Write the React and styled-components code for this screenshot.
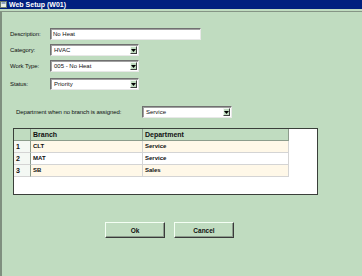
import React from "react";
import styled, { createGlobalStyle } from "styled-components";

const GlobalStyle = createGlobalStyle`
    html, body {
        margin: 0;
        padding: 0;
        background: #c0dcc0;
    }
    * {
        box-sizing: border-box;
    }
`;

const rows = [
    { no: 1, branch: "CLT", dept: "Service" },
    { no: 2, branch: "MAT", dept: "Service" },
    { no: 3, branch: "SB", dept: "Sales" },
];

const DropArrow = () => (
    <svg width="5" height="3" viewBox="0 0 5 3">
        <path d="M0 0h5L2.5 3z" fill="#000" />
    </svg>
);

const Select = ({ value, width }) => (
    <SelectBox $width={width}>
        <SelectText>{value}</SelectText>
        <DropButton>
            <DropArrow />
        </DropButton>
    </SelectBox>
);

const App = () => {
    return (
        <Window>
            <GlobalStyle />
            <TitleBar>
                <TitleIcon>
                    <svg width="7" height="7" viewBox="0 0 7 7">
                        <rect x="0.5" y="0.5" width="6" height="6" fill="#e8f0e8" stroke="#6a7a6a" />
                        <rect x="1.5" y="1.5" width="4" height="1" fill="#3a5aa0" />
                    </svg>
                </TitleIcon>
                <TitleText>Web Setup (W01)</TitleText>
            </TitleBar>
            <Rule />
            <Body>
                <Field>
                    <Label>Description:</Label>
                    <TextInput>No Heat</TextInput>
                </Field>
                <Field>
                    <Label>Category:</Label>
                    <Select value="HVAC" width={89} />
                </Field>
                <Field>
                    <Label>Work Type:</Label>
                    <Select value="005 - No Heat" width={89} />
                </Field>
                <Field $top={6}>
                    <Label>Status:</Label>
                    <Select value="Priority" width={89} />
                </Field>

                <DeptRow>
                    <DeptLabel>Department when no branch is assigned:</DeptLabel>
                    <Select value="Service" width={90} />
                </DeptRow>

                <TableBox>
                    <Grid>
                        <HeadCell />
                        <HeadCell>Branch</HeadCell>
                        <HeadCell>Department</HeadCell>
                        {rows.map((r, i) => (
                            <React.Fragment key={r.no}>
                                <NumCell>{r.no}</NumCell>
                                <Cell $alt={i % 2 === 0}>{r.branch}</Cell>
                                <Cell $alt={i % 2 === 0}>{r.dept}</Cell>
                            </React.Fragment>
                        ))}
                    </Grid>
                </TableBox>

                <Buttons>
                    <Button>Ok</Button>
                    <Button>Cancel</Button>
                </Buttons>
            </Body>
        </Window>
    );
};

const Window = styled.div`
    width: 362px;
    height: 276px;
    background: #c0dcc0;
    display: flex;
    flex-direction: column;
    font-family: "Liberation Sans", Arial, sans-serif;
    color: #101010;
    overflow: hidden;
`;

const TitleBar = styled.div`
    height: 9px;
    background: #00207f;
    display: flex;
    align-items: center;
    gap: 2px;
`;

const TitleIcon = styled.span`
    display: flex;
    width: 7px;
    height: 7px;
`;

const TitleText = styled.span`
    color: #ffffff;
    font-weight: bold;
    font-size: 7px;
    line-height: 9px;
`;

const Rule = styled.div`
    margin-top: 2px;
    height: 1px;
    background: #859585;
`;

const Body = styled.div`
    flex: 1;
    border-left: 2px solid #7f8f7f;
    padding: 16px 0 0 8px;
    display: flex;
    flex-direction: column;
`;

const Field = styled.div`
    display: flex;
    align-items: center;
    height: 12px;
    margin-top: ${(p) => (p.$top !== undefined ? p.$top : 4)}px;

    &:first-child {
        margin-top: 0;
    }
`;

const Label = styled.span`
    width: 40px;
    font-size: 6px;
    letter-spacing: -0.1px;
`;

const sunken = `
    background: #ffffff;
    border-top: 1px solid #707070;
    border-left: 1px solid #707070;
    border-bottom: 1px solid #e8e8e8;
    border-right: 1px solid #e8e8e8;
    box-shadow: inset 1px 1px 0 #a0a0a0;
`;

const TextInput = styled.div`
    ${sunken}
    width: 151px;
    height: 12px;
    font-size: 6px;
    line-height: 10px;
    padding-left: 2px;
`;

const SelectBox = styled.div`
    ${sunken}
    width: ${(p) => p.$width}px;
    height: 12px;
    display: flex;
    align-items: center;
    justify-content: space-between;
    padding: 0 1px 0 3px;
`;

const SelectText = styled.span`
    font-size: 6px;
    line-height: 10px;
`;

const DropButton = styled.span`
    width: 7px;
    height: 8px;
    background: #c0dcc0;
    border-top: 1px solid #f0f8f0;
    border-left: 1px solid #f0f8f0;
    border-bottom: 1px solid #404040;
    border-right: 1px solid #404040;
    display: flex;
    align-items: center;
    justify-content: center;
`;

const DeptRow = styled.div`
    display: flex;
    align-items: center;
    height: 12px;
    margin-top: 16px;
    padding-left: 6px;
`;

const DeptLabel = styled.span`
    width: 126px;
    font-size: 6px;
    letter-spacing: -0.1px;
`;

const TableBox = styled.div`
    margin: 10px 0 0 3px;
    width: 305px;
    height: 67px;
    background: #ffffff;
    border: 1px solid #3a3f3a;
`;

const Grid = styled.div`
    display: grid;
    grid-template-columns: 17px 112px 146px;
    grid-auto-rows: 12px;
`;

const HeadCell = styled.div`
    background: #c0dcc0;
    border-right: 1px solid #8c9c8c;
    border-bottom: 1px solid #8c9c8c;
    font-size: 7px;
    font-weight: bold;
    line-height: 11px;
    padding-left: 2px;
`;

const NumCell = styled.div`
    background: #f4f8f4;
    border-right: 1px solid #8c9c8c;
    border-bottom: 1px solid #d4d4d4;
    font-size: 7px;
    font-weight: bold;
    line-height: 11px;
    padding-left: 2px;
`;

const Cell = styled.div`
    background: ${(p) => (p.$alt ? "#fff8e8" : "#ffffff")};
    border-right: 1px solid #d4d4d4;
    border-bottom: 1px solid #d4d4d4;
    font-size: 6px;
    font-weight: bold;
    line-height: 11px;
    padding-left: 2px;
`;

const Buttons = styled.div`
    display: flex;
    gap: 9px;
    margin-top: 27px;
    padding-left: 95px;
`;

const Button = styled.button`
    width: 60px;
    height: 16px;
    padding: 0;
    background: #c0dcc0;
    border-top: 1px solid #f4fff4;
    border-left: 1px solid #f4fff4;
    border-bottom: 1px solid #3a3a3a;
    border-right: 1px solid #3a3a3a;
    box-shadow: inset -1px -1px 0 #8c9c8c;
    font-family: "Liberation Sans", Arial, sans-serif;
    font-size: 6.5px;
    font-weight: bold;
    color: #101010;
`;

export default App;
